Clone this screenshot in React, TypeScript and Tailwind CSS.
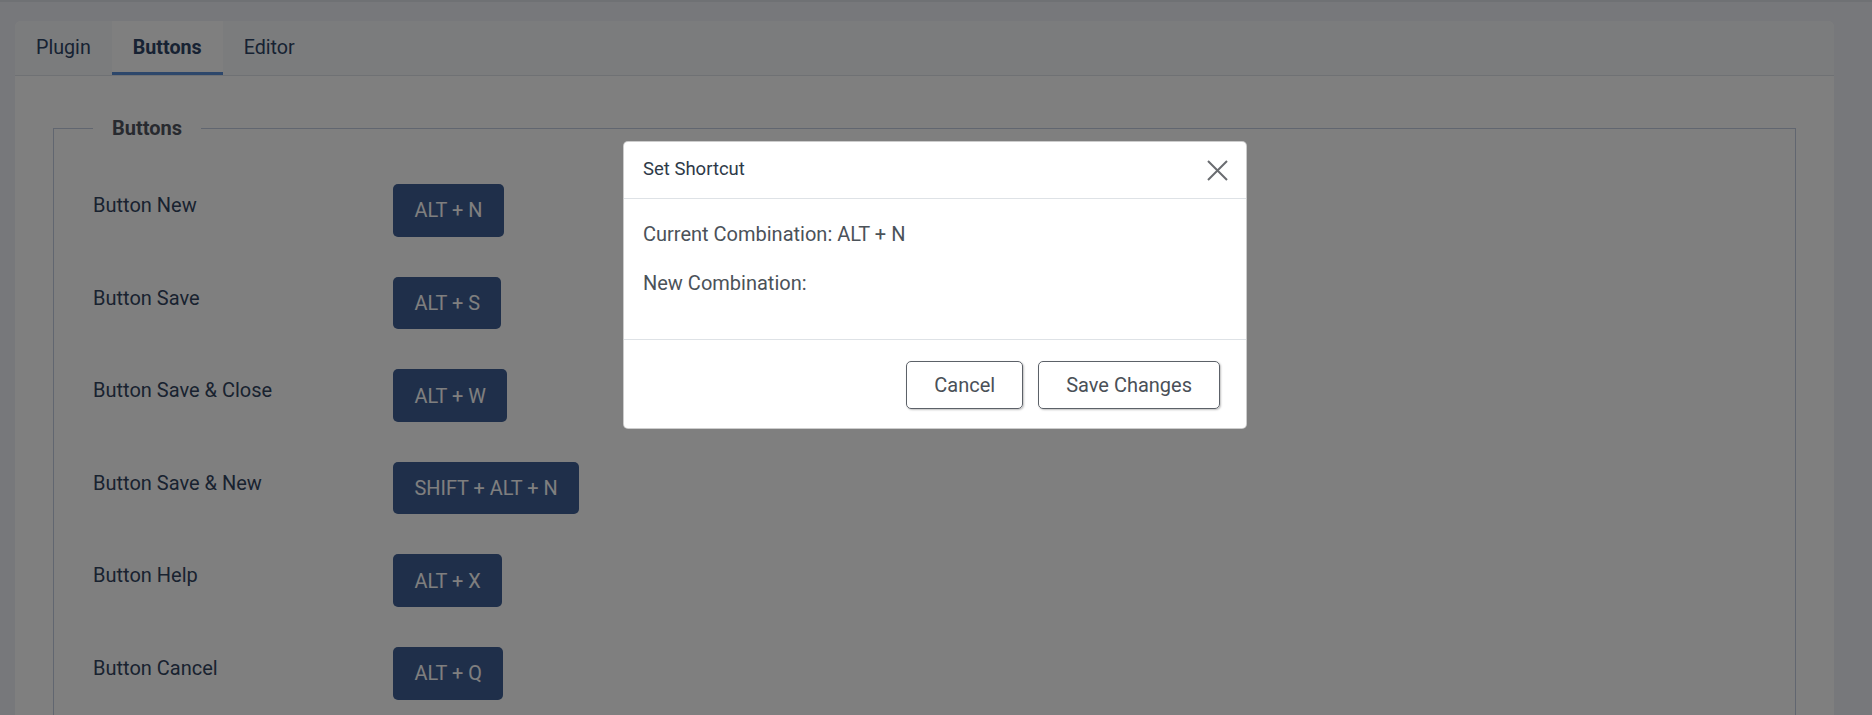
interface Shortcut {
  label: string
  keys: string
}

const shortcuts: Shortcut[] = [
  { label: 'Button New', keys: 'ALT + N' },
  { label: 'Button Save', keys: 'ALT + S' },
  { label: 'Button Save & Close', keys: 'ALT + W' },
  { label: 'Button Save & New', keys: 'SHIFT + ALT + N' },
  { label: 'Button Help', keys: 'ALT + X' },
  { label: 'Button Cancel', keys: 'ALT + Q' },
]

const tabs = ['Plugin', 'Buttons', 'Editor']

export default function App() {
  return (
    <div className="relative h-[715px] overflow-hidden bg-[#eef1f6] font-['Roboto',sans-serif]">
      <div className="h-[2px] bg-[#dfe2e8]" />

      {/* Page card */}
      <div className="pl-[15px] pr-[38px] pt-[19px]">
        <div className="rounded-t-[6px] bg-white">
          {/* Tabs */}
          <div className="flex h-[55px] rounded-t-[6px] border-b border-[#dfe3e8] bg-[#f7f8fa]">
            {tabs.map((tab) => (
              <div
                key={tab}
                className={`flex items-center px-[21px] text-[19.7px] leading-[30px] text-[#2f4566] ${
                  tab === 'Buttons' ? 'bg-white font-bold shadow-[inset_0_-3px_0_#5a8ed6]' : ''
                } ${tab === 'Plugin' ? 'rounded-tl-[6px]' : ''}`}
              >
                {tab}
              </div>
            ))}
          </div>

          {/* Content */}
          <div className="px-[38px] pt-[37px]">
            <fieldset className="m-0 border border-[#c2cde0] pb-[40px] pl-[39px] pr-[39px]">
              <legend className="px-[19px] text-[20px] font-bold leading-[30px] text-[#50555f]">Buttons</legend>

              <div className="mt-[41px] flex flex-col">
                {shortcuts.map((s) => (
                  <div key={s.label} className="flex h-[92.6px] items-start">
                    <div className="w-[300px] pt-[6px] text-[20px] leading-[30px] text-[#33455f]">{s.label}</div>
                    <button className="flex h-[52.7px] items-center rounded-[5px] bg-[#3e5e94] px-[21.5px] pt-[2px] text-[19.9px] leading-[30px] text-white">
                      {s.keys}
                    </button>
                  </div>
                ))}
              </div>
            </fieldset>
          </div>
        </div>
      </div>

      {/* Backdrop */}
      <div className="absolute inset-0 bg-black/50" />

      {/* Modal */}
      <div className="absolute left-[623px] top-[141px] w-[624px] rounded-[5px] border border-black/20 bg-white">
        <div className="flex h-[57px] items-center justify-between border-b border-[#dee2e6] pl-[19px] pr-[18px]">
          <span className="text-[18.5px] text-[#2e3a48]">Set Shortcut</span>
          <svg width="21" height="21" viewBox="0 0 21 21" className="text-[#696c70]">
            <path d="M1 1 L20 20 M20 1 L1 20" stroke="currentColor" strokeWidth="2" fill="none" />
          </svg>
        </div>
        <div className="px-[19px] pb-[41px] pt-[20px] text-[20px] leading-[30px] text-[#4b5259]">
          <p>Current Combination: ALT + N</p>
          <p className="mt-[19px]">New Combination:</p>
        </div>
        <div className="flex justify-end gap-[15px] border-t border-[#dee2e6] pb-[19px] pr-[26px] pt-[21px]">
          <button className="h-[47.5px] rounded-[5px] border border-[#5c6168] px-[27px] text-[20px] text-[#4a5057] shadow-[1px_1px_2px_rgba(0,0,0,0.25)]">
            Cancel
          </button>
          <button className="h-[47.5px] rounded-[5px] border border-[#5c6168] px-[27px] text-[20px] text-[#4a5057] shadow-[1px_1px_2px_rgba(0,0,0,0.25)]">
            Save Changes
          </button>
        </div>
      </div>
    </div>
  )
}
